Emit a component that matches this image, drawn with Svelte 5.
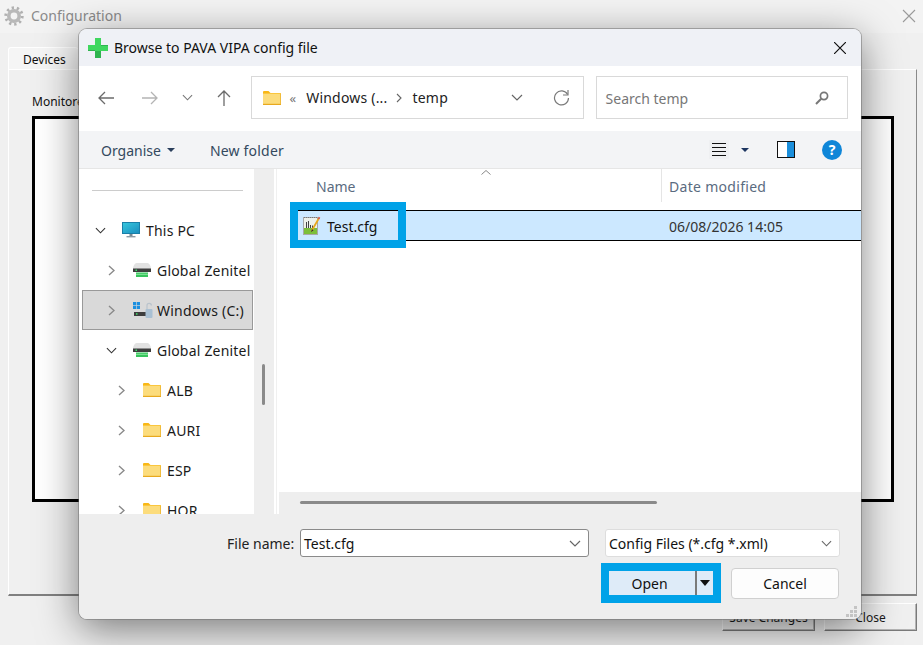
<script>
  const tree = [
    { label: 'This PC', level: 0, open: true, icon: 'pc' },
    { label: 'Global Zenitel', level: 1, icon: 'drive' },
    { label: 'Windows (C:)', level: 1, icon: 'win', selected: true },
    { label: 'Global Zenitel', level: 1, open: true, icon: 'drive' },
    { label: 'ALB', level: 2, icon: 'folder' },
    { label: 'AURI', level: 2, icon: 'folder' },
    { label: 'ESP', level: 2, icon: 'folder' },
    { label: 'HOR', level: 2, icon: 'folder' }
  ];
</script>

{#snippet folderIcon()}
  <svg class="ic-folder" width="18" height="14" viewBox="0 0 18 14">
    <path d="M0 1.2C0 .5.5 0 1.2 0h4.3l2 2H18v2H0z" fill="#f9b716"/>
    <rect x="0" y="2.6" width="18" height="11.4" fill="#fcdc7c"/>
    <rect x="0" y="12.8" width="18" height="1.2" fill="#e8a91e"/>
    <rect x="17" y="3" width="1" height="10" fill="#f0bb3c"/>
  </svg>
{/snippet}

{#snippet driveIcon()}
  <svg width="18" height="14" viewBox="0 0 18 14">
    <path d="M3.500 0h11C16 0 18 3 18 6H0C0 3 2 0 3.500 0z" fill="#e2e2e2"/>
    <rect x="0" y="5.500" width="18" height="3.500" fill="#3d3d3d"/>
    <rect x="2.500" y="6.500" width="1.500" height="1.500" fill="#3fe06a"/>
    <rect x="3" y="9.500" width="12" height="4.500" fill="#37c45c"/>
    <rect x="3" y="10.800" width="12" height="1" fill="#8be8a0"/>
  </svg>
{/snippet}

{#snippet rowIcon(name)}
  {#if name === 'pc'}
    <svg width="18" height="16" viewBox="0 0 18 16">
      <defs>
        <linearGradient id="pcg" x1="0" y1="0" x2="1" y2="1">
          <stop offset="0" stop-color="#36c6dc"/><stop offset="1" stop-color="#1c8fc0"/>
        </linearGradient>
      </defs>
      <rect x="0" y="0" width="18" height="12" fill="#1a7fa8"/>
      <rect x="1" y="1" width="16" height="10" fill="url(#pcg)"/>
      <rect x="7.500" y="12" width="3" height="2" fill="#7b8a93"/>
      <rect x="4.500" y="14" width="9" height="1.400" fill="#8b9aa3"/>
    </svg>
  {:else if name === 'drive'}
    {@render driveIcon()}
  {:else if name === 'win'}
    <svg width="20" height="17" viewBox="0 0 20 17">
      <rect x="0" y="0" width="3.200" height="3.200" fill="#1b8fe0"/>
      <rect x="3.800" y="0" width="3.200" height="3.200" fill="#1b8fe0"/>
      <rect x="0" y="3.800" width="3.200" height="3.200" fill="#1b8fe0"/>
      <rect x="3.800" y="3.800" width="3.200" height="3.200" fill="#1b8fe0"/>
      <rect x="1" y="10" width="17" height="4" fill="#3d3d3d"/>
      <rect x="3" y="11.200" width="1.500" height="1.500" fill="#3fe06a"/>
      <path d="M14 7V3.500a2.200 2.200 0 0 1 4.400 0" fill="none" stroke="#b9c3cc" stroke-width="1.200"/>
      <rect x="12.500" y="7" width="7" height="9" rx="1" fill="#a9c0d3"/>
    </svg>
  {:else}
    {@render folderIcon()}
  {/if}
{/snippet}

{#snippet chevronDown(w = 12, c = '#666')}
  <svg width={w} height="7" viewBox="0 0 12 7"><path d="M1 1l5 5 5-5" fill="none" stroke={c} stroke-width="1.200"/></svg>
{/snippet}

<div class="screen">
  <header class="win-title">
    <svg class="gear" width="20" height="20" viewBox="0 0 20 20">
      <circle cx="10" cy="10" r="8.200" fill="none" stroke="#b0b0b0" stroke-width="3" stroke-dasharray="2.300 2.850"/>
      <circle cx="10" cy="10" r="5.200" fill="none" stroke="#b8b8b8" stroke-width="3.600"/>
    </svg>
    <span class="win-name">Configuration</span>
    <svg class="win-close" width="14" height="14" viewBox="0 0 14 14"><path d="M1 1l12 12M13 1L1 13" stroke="#9a9a9a" stroke-width="1.100"/></svg>
  </header>

  <div class="tabs"><span class="tab">Devices</span></div>
  <section class="pane">
    <div class="monitored">Monitored devices</div>
    <div class="black-box"></div>
  </section>
  <footer class="win-actions">
    <button class="win-btn save">Save Changes</button>
    <button class="win-btn close">Close</button>
  </footer>

  <div class="dialog">
    <div class="d-title">
      <svg class="plus" width="20" height="20" viewBox="0 0 20 20">
        <path d="M7 0h6v7h7v6h-7v7H7v-7H0V7h7z" fill="#3fd75f"/>
        <path d="M7 13h6v7H7zM13 7h7v1h-7zM0 13h7v-1H0z" fill="#2aa548" opacity=".7"/>
      </svg>
      <span class="d-name">Browse to PAVA VIPA config file</span>
      <svg class="d-close" width="12" height="12" viewBox="0 0 12 12"><path d="M0 0l12 12M12 0L0 12" stroke="#111" stroke-width="1.200"/></svg>
    </div>

    <div class="nav">
      <span class="cell back">
        <svg width="16" height="14" viewBox="0 0 16 14"><path d="M16 7H1M7 1L1 7l6 6" fill="none" stroke="#6b6b6b" stroke-width="1.300"/></svg>
      </span>
      <span class="cell fwd">
        <svg width="16" height="14" viewBox="0 0 16 14"><path d="M0 7h15M9 1l6 6-6 6" fill="none" stroke="#b4b4b4" stroke-width="1.300"/></svg>
      </span>
      <span class="cell hist">{@render chevronDown(11, '#777')}</span>
      <span class="cell up">
        <svg width="14" height="16" viewBox="0 0 14 16"><path d="M7 16V1M1 7l6-6 6 6" fill="none" stroke="#6b6b6b" stroke-width="1.300"/></svg>
      </span>
      <div class="address">
        {@render folderIcon()}
        <span class="crumb-more">«</span>
        <span class="crumb">Windows (...</span>
        <svg class="crumb-sep" width="6" height="10" viewBox="0 0 6 10"><path d="M1 1l4 4-4 4" fill="none" stroke="#666" stroke-width="1.100"/></svg>
        <span class="crumb">temp</span>
        <span class="addr-drop">{@render chevronDown(12, '#666')}</span>
        <svg class="refresh" width="17" height="17" viewBox="0 0 17 17">
          <path d="M14.600 5.500A7 7 0 1 0 15.500 9" fill="none" stroke="#7a7a7a" stroke-width="1.200"/>
          <path d="M15 1v5h-5" fill="none" stroke="#7a7a7a" stroke-width="1.200"/>
        </svg>
      </div>
      <div class="search">
        <span class="search-text">Search temp</span>
        <svg width="14" height="14" viewBox="0 0 14 14">
          <circle cx="9" cy="5" r="3.600" fill="none" stroke="#777" stroke-width="1.700"/>
          <path d="M6.200 7.800L1 13" stroke="#777" stroke-width="2"/>
        </svg>
      </div>
    </div>

    <div class="toolbar">
      <span class="tool organise">Organise</span>
      <i class="caret"></i>
      <span class="tool newfolder">New folder</span>
      <span class="tools-right">
        <span class="view-ic"><i></i><i></i><i></i><i></i></span>
        <i class="caret dark"></i>
        <svg class="pane-ic" width="18" height="17" viewBox="0 0 18 17">
          <rect x=".5" y=".5" width="17" height="16" fill="#fff" stroke="#111"/>
          <rect x="10" y="1" width="7" height="15" fill="#1b8fdc"/>
        </svg>
        <span class="help">?</span>
      </span>
    </div>

    <div class="main">
      <nav class="sidebar">
        <div class="side-rule"></div>
        {#each tree as row}
          <div class="tree-row lvl{row.level}" class:selected={row.selected}>
            <span class="twisty">
              {#if row.open}
                {@render chevronDown(11, '#333')}
              {:else}
                <svg width="7" height="11" viewBox="0 0 7 11"><path d="M1 1l5 4.500-5 4.500" fill="none" stroke="#8a8a8a" stroke-width="1.400"/></svg>
              {/if}
            </span>
            <span class="row-icon">{@render rowIcon(row.icon)}</span>
            <span class="row-label">{row.label}</span>
          </div>
        {/each}
      </nav>
      <div class="side-scroll"><i></i></div>
      <div class="files">
        <div class="file-head">
          <span class="col-name">Name</span>
          <svg class="sort" width="10" height="5" viewBox="0 0 10 5"><path d="M.5 4.500L5 .5l4.500 4" fill="none" stroke="#888"/></svg>
          <span class="col-date">Date modified</span>
        </div>
        <div class="file-row">
          <span class="file-main">
            <svg width="18" height="20" viewBox="0 0 18 20">
              <rect x=".5" y="1.500" width="14" height="17" fill="#eef1ea" stroke="#a8a8a8"/>
              <path d="M1 1.500h13" stroke="#777" stroke-dasharray="1 1"/>
              <rect x="1" y="12" width="13" height="6" fill="#7cbf3a"/>
              <path d="M3.500 6v6M5.500 5v7M7.500 9v3M9.500 9.500V12" stroke="#444"/>
              <path d="M8.500 15L15.500 3" stroke="#e9a81c" stroke-width="1.800"/>
              <path d="M15.500 3l1-1.700" stroke="#d9533b" stroke-width="1.800"/>
              <path d="M9 13L8 16l2.500-1.500" fill="#333"/>
            </svg>
            <span>Test.cfg</span>
          </span>
          <span class="file-date">06/08/2026 14:05</span>
        </div>
        <div class="mark file-mark"></div>
        <div class="hscroll"><i></i></div>
      </div>
    </div>

    <div class="bottom">
      <div class="b-row first">
        <label class="fn-label" for="fn">File name:</label>
        <div class="combo fn"><span id="fn">Test.cfg</span>{@render chevronDown(12, '#666')}</div>
        <div class="combo type"><span>Config Files (*.cfg *.xml)</span>{@render chevronDown(11, '#666')}</div>
      </div>
      <div class="b-row second">
        <div class="open-mark">
          <span class="open-label">Open</span>
          <span class="open-split"><i></i></span>
        </div>
        <button class="cancel">Cancel</button>
      </div>
      <svg class="grip" width="12" height="12" viewBox="0 0 12 12" fill="#c4c4c4">
        <rect x="8" y="0" width="3" height="3"/>
        <rect x="4" y="4" width="3" height="3"/><rect x="8" y="4" width="3" height="3"/>
        <rect x="0" y="8" width="3" height="3"/><rect x="4" y="8" width="3" height="3"/><rect x="8" y="8" width="3" height="3"/>
      </svg>
    </div>
  </div>
</div>

<style>
  :global(body) { margin: 0; }
  .screen {
    position: relative;
    width: 923px;
    height: 645px;
    overflow: hidden;
    background: #f0f0f0;
    font-family: "Noto Sans", "Open Sans", sans-serif;
    font-size: 14px;
    color: #1a1a1a;
  }
  button { font: inherit; color: inherit; }

  .win-title {
    height: 33px;
    display: flex;
    align-items: center;
    background: #f3f3f3;
    padding: 0 7px 2px 4px;
    box-sizing: border-box;
  }
  .gear { flex: none; }
  .win-name { margin-left: 7px; color: #8a8a8a; font-size: 14px; }
  .win-close { margin-left: auto; }
  .tabs { height: 36px; padding: 14px 0 0 8px; box-sizing: border-box; }
  .tab {
    display: block;
    width: 70px;
    height: 22px;
    background: #f5f5f5;
    border-radius: 3px 3px 0 0;
    border-top: 1px solid #fff;
    border-left: 1px solid #fff;
    box-sizing: border-box;
    padding: 4px 0 0 14px;
    font-size: 12px;
    line-height: 16px;
    color: #111;
  }
  .pane {
    margin-left: 8px;
    width: 909px;
    height: 527px;
    box-sizing: border-box;
    border-top: 1px solid #fff;
    border-left: 1px solid #fff;
    border-right: 1px solid #8a8a8a;
    border-bottom: 2px solid #808080;
    padding: 24px 23px 0 23px;
  }
  .monitored { font-size: 12px; line-height: 16px; color: #111; }
  .black-box {
    margin-top: 6px;
    height: 386px;
    width: 862px;
    box-sizing: border-box;
    border: 3px solid #000;
    background: #fff;
  }
  .win-actions {
    display: flex;
    justify-content: flex-end;
    gap: 9px;
    padding: 7px 6px 0 0;
  }
  .win-btn {
    width: 93px;
    height: 28px;
    padding: 0;
    box-sizing: border-box;
    background: #f0f0f0;
    border: 1px solid;
    border-color: #fff #7a7a7a #7a7a7a #fff;
    font-size: 12px;
    box-shadow: inset -1px -1px 0 #b4b4b4;
  }

  .dialog {
    position: absolute;
    left: 79px;
    top: 29px;
    width: 782px;
    height: 590px;
    display: flex;
    flex-direction: column;
    border-radius: 8px;
    overflow: hidden;
    background: #eee;
    box-shadow: 0 0 0 1px rgba(110,110,110,.5), 0 10px 40px rgba(0,0,0,.5);
  }
  .d-title {
    height: 37px;
    flex: none;
    display: flex;
    align-items: center;
    padding: 0 15px 0 9px;
    background: #eff1f6;
  }
  .d-name { margin-left: 6px; color: #111; font-size: 14px; }
  .d-close { margin-left: auto; }

  .nav {
    height: 65px;
    flex: none;
    background: #fff;
    display: flex;
    align-items: flex-start;
    padding: 10px 13px 0 5px;
    box-sizing: border-box;
  }
  .cell { height: 43px; display: flex; align-items: center; justify-content: center; }
  .back, .fwd { width: 44px; }
  .hist { width: 32px; }
  .up { width: 40px; margin-right: 7px; }
  .address, .search {
    height: 43px;
    box-sizing: border-box;
    border: 1px solid #d9d9d9;
    display: flex;
    align-items: center;
  }
  .address { width: 333px; margin-right: 12px; padding: 0 13px 0 11px; flex: none; }
  .crumb-more { margin: 0 10px 0 9px; color: #777; font-size: 13px; }
  .crumb-sep { margin: 0 11px 0 8px; }
  .crumb { color: #222; letter-spacing: .2px; }
  .addr-drop { margin-left: auto; margin-right: 30px; display: flex; }
  .search { width: 253px; padding: 0 18px 0 9px; justify-content: space-between; }
  .search-text { color: #777; padding-top: 1px; }

  .toolbar {
    height: 38px;
    flex: none;
    background: #f3f4f6;
    border-bottom: 1px solid #e6e6e6;
    box-sizing: border-box;
    display: flex;
    align-items: center;
    padding: 0 19px 0 22px;
  }
  .tool { color: #34495e; padding-top: 1px; }
  .caret {
    width: 0; height: 0;
    margin: 0 0 0 6px;
    border-left: 4px solid transparent;
    border-right: 4px solid transparent;
    border-top: 4px solid #2b3f5c;
  }
  .newfolder { margin-left: 35px; letter-spacing: .2px; }
  .tools-right { margin-left: auto; display: flex; align-items: center; }
  .view-ic {
    display: flex;
    flex-direction: column;
    gap: 3px;
    width: 14px;
    background: #eff0f2;
    box-shadow: 0 0 0 3px #eff0f2;
  }
  .view-ic i { height: 1px; background: #111; }
  .caret.dark { margin: 0 0 0 15px; border-top-color: #1d3560; }
  .pane-ic { margin-left: 28px; }
  .help {
    margin-left: 27px;
    width: 20px;
    height: 20px;
    border-radius: 50%;
    background: #0f86d8;
    color: #fff;
    font-size: 14px;
    font-weight: 700;
    line-height: 20px;
    text-align: center;
  }

  .main { flex: 1; min-height: 0; display: flex; background: #fff; }
  .sidebar { width: 175px; flex: none; overflow: hidden; padding-top: 21px; box-sizing: border-box; }
  .side-rule { height: 1px; background: #ccc; margin: 0 11px 19px 13px; }
  .tree-row {
    height: 40px;
    display: flex;
    align-items: center;
    box-sizing: border-box;
    margin-left: 3px;
    margin-right: 1px;
    white-space: nowrap;
    overflow: hidden;
  }
  .tree-row.selected { background: #d9d9d9; border: 1px solid #999; }
  .twisty { width: 14px; display: flex; justify-content: center; flex: none; }
  .lvl0 .twisty { margin-left: 11px; }
  .lvl1 .twisty { margin-left: 22px; }
  .lvl1.selected .twisty { margin-left: 21px; }
  .lvl2 .twisty { margin-left: 32px; }
  .row-icon { width: 24px; display: flex; margin-left: 15px; flex: none; }
  .row-label { color: #1a1a1a; letter-spacing: .2px; }

  .side-scroll { width: 20px; flex: none; background: #eee; position: relative; margin-right: 2px; }
  .side-scroll i {
    position: absolute;
    left: 8px;
    top: 195px;
    width: 3px;
    height: 41px;
    border-radius: 2px;
    background: #8a8a8a;
  }

  .files { flex: 1; position: relative; border-left: 1px solid #f0f0f0; min-width: 0; }
  .file-head { height: 33px; position: relative; color: #5a6b80; }
  .col-name { position: absolute; left: 39px; top: 8px; }
  .col-date { position: absolute; left: 392px; top: 8px; letter-spacing: .3px; }
  .col-date::before {
    content: "";
    position: absolute;
    left: -8px;
    top: -8px;
    height: 33px;
    width: 1px;
    background: #e5e5e5;
  }
  .sort { position: absolute; left: 204px; top: 1px; }
  .file-row {
    margin: 8px 0 0 16px;
    height: 31px;
    box-sizing: border-box;
    border-top: 1px solid #000;
    border-bottom: 1px solid #000;
    background: #cce8ff;
    display: flex;
    align-items: center;
  }
  .file-main { display: flex; align-items: center; gap: 6px; padding-left: 10px; width: 366px; flex: none; color: #111; }
  .file-main span { padding-top: 1px; }
  .file-date { color: #333; padding-top: 1px; }
  .mark {
    box-sizing: border-box;
    border: 8px solid #00a2e8;
  }
  .file-mark { position: absolute; left: 13px; top: 33px; width: 116px; height: 46px; }
  .hscroll {
    position: absolute;
    left: 2px; right: 0; bottom: 0;
    height: 22px;
    background: #eee;
  }
  .hscroll i {
    position: absolute;
    left: 21px;
    top: 9px;
    width: 357px;
    height: 3px;
    border-radius: 2px;
    background: #8a8a8a;
  }

  .bottom { height: 105px; flex: none; background: #eee; position: relative; }
  .b-row { display: flex; align-items: center; }
  .first { padding-top: 15px; }
  .fn-label { margin-left: 148px; margin-right: 6px; color: #222; width: 67px; white-space: nowrap; }
  .combo {
    height: 28px;
    box-sizing: border-box;
    display: flex;
    align-items: center;
    justify-content: space-between;
    background: #fff;
    border-radius: 3px;
    padding: 0 7px 0 3px;
    color: #111;
  }
  .fn { width: 289px; border: 1px solid #8a8a8a; margin-right: 16px; }
  .type { width: 235px; border: 1px solid #ddd; padding-right: 7px; }
  .second { padding: 6px 0 0 522px; align-items: center; }
  .open-mark {
    width: 120px;
    height: 40px;
    box-sizing: border-box;
    border: 8px solid #00a2e8;
    background: #deebf8;
    display: flex;
    align-items: center;
  }
  .open-label { width: 81px; padding-right: 5px; text-align: center; color: #111; }
  .open-split {
    flex: 1;
    height: 100%;
    border-left: 2px solid #7a7a7a;
    display: flex;
    align-items: center;
    justify-content: center;
  }
  .open-split i {
    width: 0; height: 0;
    border-left: 5px solid transparent;
    border-right: 5px solid transparent;
    border-top: 6px solid #111;
  }
  .cancel {
    margin-left: 10px;
    width: 108px;
    height: 31px;
    padding: 0;
    box-sizing: border-box;
    background: #fdfdfd;
    border: 1px solid #d0d0d0;
    border-radius: 4px;
    color: #111;
  }
  .grip { position: absolute; right: 3px; bottom: 1px; }
</style>
